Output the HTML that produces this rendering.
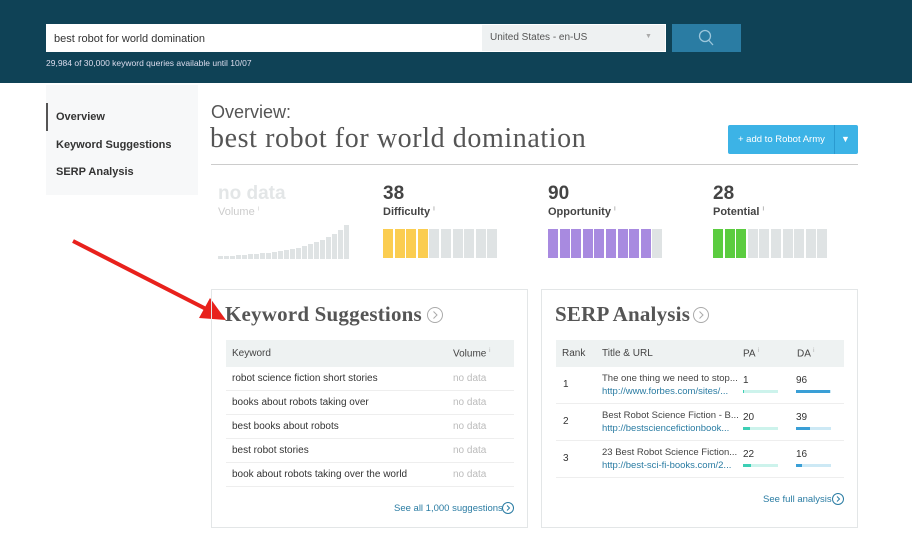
<!DOCTYPE html><html><head><style>
*{margin:0;padding:0;box-sizing:border-box}
body{width:912px;height:540px;background:#fff;font-family:"Liberation Sans",sans-serif;color:#333;position:relative;overflow:hidden}
.a{position:absolute}
.hdr{left:0;top:0;width:912px;height:83px;background:#0f4256}
.bar{position:absolute;top:229px;width:8px;height:29px}
.h2{font-size:21px;font-weight:bold;color:#555;font-family:'Liberation Serif',serif;letter-spacing:0.2px}
</style></head><body>
<div class="a hdr"></div>
<div class="a" style="left:46px;top:24px;width:620px;height:28px;background:#fff"></div>
<div class="a" style="left:54px;top:33px;font-size:11px;color:#333">best robot for world domination</div>
<div class="a" style="left:482px;top:25px;width:183px;height:26px;background:#eef1f2"></div>
<div class="a" style="left:490px;top:32px;font-size:10px;color:#555">United States - en-US</div>
<div class="a" style="left:645px;top:33px;font-size:7px;color:#aaa">▼</div>
<div class="a" style="left:672px;top:24px;width:69px;height:28px;background:#2a7ca3"></div>
<svg class="a" style="left:696px;top:28px" width="20" height="20"><circle cx="9" cy="8" r="5.5" fill="none" stroke="#9cc7dc" stroke-width="1.3"/><line x1="12.5" y1="12" x2="17" y2="17" stroke="#9cc7dc" stroke-width="1.3"/></svg>
<div class="a" style="left:46px;top:58px;font-size:8.5px;color:#dde">29,984 of 30,000 keyword queries available until 10/07</div>

<div class="a" style="left:46px;top:85px;width:152px;height:110px;background:#f7f8f9"></div>
<div class="a" style="left:46px;top:103px;width:2px;height:28px;background:#555"></div>
<div class="a" style="left:56px;top:111px;font-size:11px;font-weight:bold;color:#333">Overview</div>
<div class="a" style="left:56px;top:139px;font-size:11px;font-weight:bold;color:#333">Keyword Suggestions</div>
<div class="a" style="left:56px;top:166px;font-size:11px;font-weight:bold;color:#333">SERP Analysis</div>

<div class="a" style="left:211px;top:102px;font-size:18px;color:#555">Overview:</div>
<div class="a" style="left:210px;top:123px;font-size:28px;color:#555;font-family:'Liberation Serif',serif;letter-spacing:0.6px">best robot for world domination</div>
<div class="a" style="left:211px;top:164px;width:647px;height:1px;background:#ccc"></div>
<div class="a" style="left:728px;top:125px;width:130px;height:29px;background:#3cb3e6;border-radius:2px"></div>
<div class="a" style="left:834px;top:125px;width:1px;height:29px;background:#2a9ad0"></div>
<div class="a" style="left:738px;top:134px;font-size:9.5px;color:#fff">+ add to Robot Army</div>
<div class="a" style="left:841px;top:134px;font-size:9px;color:#fff">▼</div>

<div class="a" style="left:218px;top:183px;font-size:19px;font-weight:bold;color:#e3e6e7">no data</div>
<div class="a" style="left:218px;top:206px;font-size:11px;color:#ccc">Volume <sup style="font-size:6px">i</sup></div>
<div class="a" style="left:383px;top:183px;font-size:19px;font-weight:bold;color:#444">38</div>
<div class="a" style="left:383px;top:206px;font-size:11px;font-weight:bold;color:#444">Difficulty <sup style="font-size:6px;color:#aaa">i</sup></div>
<div class="a" style="left:548px;top:183px;font-size:19px;font-weight:bold;color:#444">90</div>
<div class="a" style="left:548px;top:206px;font-size:11px;font-weight:bold;color:#444">Opportunity <sup style="font-size:6px;color:#aaa">i</sup></div>
<div class="a" style="left:713px;top:183px;font-size:19px;font-weight:bold;color:#444">28</div>
<div class="a" style="left:713px;top:206px;font-size:11px;font-weight:bold;color:#444">Potential <sup style="font-size:6px;color:#aaa">i</sup></div>

<svg class="a" style="left:218px;top:222px" width="140" height="37"><g fill="#dfe3e4">
<rect x="0" y="34" width="5" height="3"/><rect x="6" y="34" width="5" height="3"/><rect x="12" y="34" width="5" height="3"/><rect x="18" y="33" width="5" height="4"/><rect x="24" y="33" width="5" height="4"/><rect x="30" y="32" width="5" height="5"/><rect x="36" y="32" width="5" height="5"/><rect x="42" y="31" width="5" height="6"/><rect x="48" y="31" width="5" height="6"/><rect x="54" y="30" width="5" height="7"/><rect x="60" y="29" width="5" height="8"/><rect x="66" y="28" width="5" height="9"/><rect x="72" y="27" width="5" height="10"/><rect x="78" y="26" width="5" height="11"/><rect x="84" y="24" width="5" height="13"/><rect x="90" y="22" width="5" height="15"/><rect x="96" y="20" width="5" height="17"/><rect x="102" y="18" width="5" height="19"/><rect x="108" y="15" width="5" height="22"/><rect x="114" y="12" width="5" height="25"/><rect x="120" y="8" width="5" height="29"/><rect x="126" y="3" width="5" height="34"/></g></svg>

<div id="bars"></div>
<script>
var h='';[[383,4,'#fbcd50'],[548,9,'#a88ae0'],[713,3,'#5bcc3f']].forEach(function(g){for(var i=0;i<10;i++){h+='<div class="bar" style="left:'+(g[0]+i*11.6)+'px;width:10px;background:'+(i<g[1]?g[2]:'#dfe3e4')+'"></div>';}});document.getElementById('bars').innerHTML=h;
</script>

<svg class="a" style="left:0;top:0" width="912" height="540"><line x1="73" y1="241" x2="210" y2="311" stroke="#e8211c" stroke-width="4"/><polygon points="226,320 199,318 210,298" fill="#e8211c"/></svg>

<div class="a" style="left:211px;top:289px;width:317px;height:239px;border:1px solid #e3e6e7"></div>
<div class="a h2" style="left:225px;top:302px">Keyword Suggestions</div>
<svg class="a" style="left:426px;top:306px" width="18" height="18"><circle cx="9" cy="9" r="7.5" fill="none" stroke="#aaa"/><path d="M7.5 5.5l3.5 3.5-3.5 3.5" fill="none" stroke="#aaa"/></svg>
<div class="a" style="left:226px;top:340px;width:288px;height:27px;background:#eef2f2"></div>
<div class="a" style="left:232px;top:348px;font-size:10px;color:#444">Keyword</div>
<div class="a" style="left:453px;top:348px;font-size:10px;color:#444">Volume <sup style="font-size:6px;color:#aaa">i</sup></div>
<div class="a" style="left:226px;top:367px;width:288px">
<div style="height:24px;border-bottom:1px solid #eee;font-size:10px;padding:6px;position:relative">robot science fiction short stories<span style="position:absolute;left:227px;color:#bbb">no data</span></div>
<div style="height:24px;border-bottom:1px solid #eee;font-size:10px;padding:6px;position:relative">books about robots taking over<span style="position:absolute;left:227px;color:#bbb">no data</span></div>
<div style="height:24px;border-bottom:1px solid #eee;font-size:10px;padding:6px;position:relative">best books about robots<span style="position:absolute;left:227px;color:#bbb">no data</span></div>
<div style="height:24px;border-bottom:1px solid #eee;font-size:10px;padding:6px;position:relative">best robot stories<span style="position:absolute;left:227px;color:#bbb">no data</span></div>
<div style="height:24px;border-bottom:1px solid #eee;font-size:10px;padding:6px;position:relative">book about robots taking over the world<span style="position:absolute;left:227px;color:#bbb">no data</span></div>
</div>
<div class="a" style="left:394px;top:503px;font-size:9.5px;color:#2a7ca3">See all 1,000 suggestions</div>
<svg class="a" style="left:501px;top:501px" width="14" height="14"><circle cx="7" cy="7" r="5.5" fill="none" stroke="#2a7ca3"/><path d="M6 4.5l2.5 2.5-2.5 2.5" fill="none" stroke="#2a7ca3"/></svg>

<div class="a" style="left:541px;top:289px;width:317px;height:239px;border:1px solid #e3e6e7"></div>
<div class="a h2" style="left:555px;top:302px">SERP Analysis</div>
<svg class="a" style="left:692px;top:306px" width="18" height="18"><circle cx="9" cy="9" r="7.5" fill="none" stroke="#aaa"/><path d="M7.5 5.5l3.5 3.5-3.5 3.5" fill="none" stroke="#aaa"/></svg>
<div class="a" style="left:556px;top:340px;width:288px;height:27px;background:#eef2f2"></div>
<div class="a" style="left:562px;top:348px;font-size:10px;color:#444">Rank</div>
<div class="a" style="left:602px;top:348px;font-size:10px;color:#444">Title &amp; URL</div>
<div class="a" style="left:743px;top:348px;font-size:10px;color:#444">PA <sup style="font-size:6px;color:#aaa">i</sup></div>
<div class="a" style="left:797px;top:348px;font-size:10px;color:#444">DA <sup style="font-size:6px;color:#aaa">i</sup></div>
<div id="serp"></div>
<script>
var r=[['1','The one thing we need to stop...','http://www.forbes.com/sites/...','1',1,'96',96],['2','Best Robot Science Fiction - B...','http://bestsciencefictionbook...','20',20,'39',39],['3','23 Best Robot Science Fiction...','http://best-sci-fi-books.com/2...','22',22,'16',16]];
var s='';r.forEach(function(d,i){var y=367+i*37;
s+='<div class="a" style="left:556px;top:'+(y+36)+'px;width:288px;height:1px;background:#eee"></div>';
s+='<div class="a" style="left:563px;top:'+(y+12)+'px;font-size:10px">'+d[0]+'</div>';
s+='<div class="a" style="left:602px;top:'+(y+6)+'px;font-size:9.5px;color:#444">'+d[1]+'</div>';
s+='<div class="a" style="left:602px;top:'+(y+19)+'px;font-size:9.5px;color:#2a7ca3">'+d[2]+'</div>';
s+='<div class="a" style="left:743px;top:'+(y+8)+'px;font-size:10px">'+d[3]+'</div>';
s+='<div class="a" style="left:796px;top:'+(y+8)+'px;font-size:10px">'+d[5]+'</div>';
s+='<div class="a" style="left:743px;top:'+(y+23)+'px;width:35px;height:3px;background:#cdf3ec"><div style="width:'+Math.max(d[4]*0.35,1)+'px;height:3px;background:#3dcfb5"></div></div>';
s+='<div class="a" style="left:796px;top:'+(y+23)+'px;width:35px;height:3px;background:#cde9f5"><div style="width:'+(d[6]*0.35)+'px;height:3px;background:#3a9fd6"></div></div>';});
document.getElementById('serp').innerHTML=s;
</script>
<div class="a" style="left:763px;top:494px;font-size:9.5px;color:#2a7ca3">See full analysis</div>
<svg class="a" style="left:831px;top:492px" width="14" height="14"><circle cx="7" cy="7" r="5.5" fill="none" stroke="#2a7ca3"/><path d="M6 4.5l2.5 2.5-2.5 2.5" fill="none" stroke="#2a7ca3"/></svg>
</body></html>
